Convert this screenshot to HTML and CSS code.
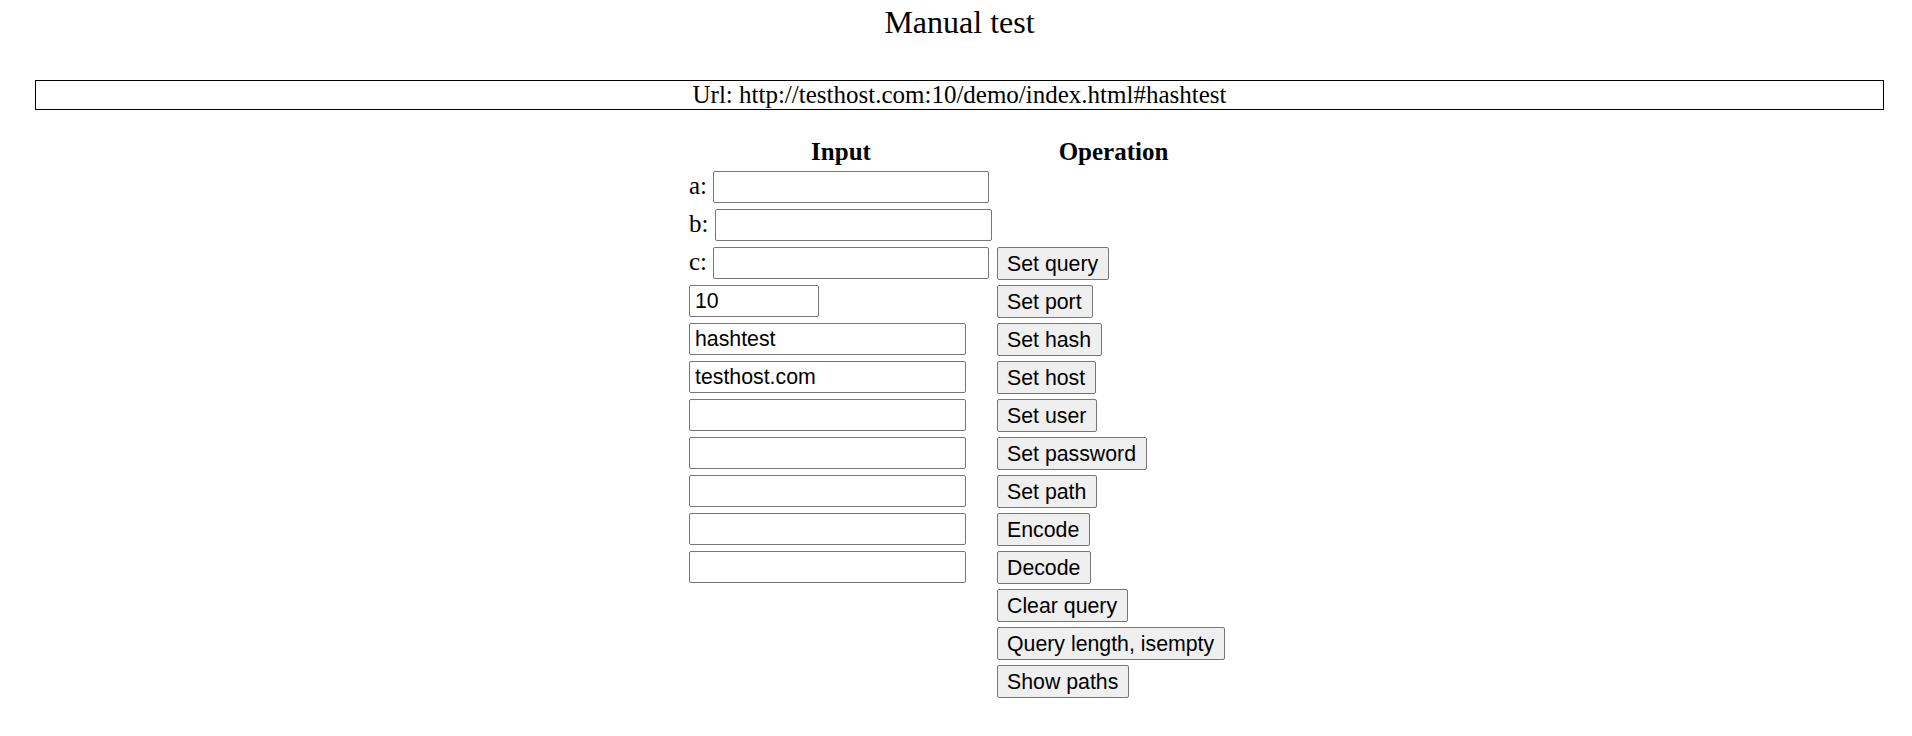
FILE: index.html
```html
<!DOCTYPE html>
<html>
<head>
<meta charset="utf-8">
<title>Manual test</title>
<link rel="stylesheet" href="styles.css">
</head>
<body>
<div class="page">
  <h2 class="title">Manual test</h2>
  <div class="url">Url: http://testhost.com:10/demo/index.html#hashtest</div>
  <table class="grid">
    <colgroup><col class="c1"><col class="c2"></colgroup>
    <thead>
      <tr><th>Input</th><th class="op">Operation</th></tr>
    </thead>
    <tbody>
      <tr><td><span class="lbl">a:</span> <input class="field fa" type="text"></td><td class="op"></td></tr>
      <tr><td><span class="lbl">b:</span> <input class="field fb" type="text"></td><td class="op"></td></tr>
      <tr><td><span class="lbl">c:</span> <input class="field fa" type="text"></td><td class="op"><button class="btn">Set query</button></td></tr>
      <tr><td><input class="field port" type="text" value="10"></td><td class="op"><button class="btn">Set port</button></td></tr>
      <tr><td><input class="field wide" type="text" value="hashtest"></td><td class="op"><button class="btn">Set hash</button></td></tr>
      <tr><td><input class="field wide" type="text" value="testhost.com"></td><td class="op"><button class="btn">Set host</button></td></tr>
      <tr><td><input class="field wide" type="text"></td><td class="op"><button class="btn">Set user</button></td></tr>
      <tr><td><input class="field wide" type="text"></td><td class="op"><button class="btn">Set password</button></td></tr>
      <tr><td><input class="field wide" type="text"></td><td class="op"><button class="btn">Set path</button></td></tr>
      <tr><td><input class="field wide" type="text"></td><td class="op"><button class="btn">Encode</button></td></tr>
      <tr><td><input class="field wide" type="text"></td><td class="op"><button class="btn">Decode</button></td></tr>
      <tr><td></td><td class="op"><button class="btn">Clear query</button></td></tr>
      <tr><td></td><td class="op"><button class="btn">Query length, isempty</button></td></tr>
      <tr><td></td><td class="op"><button class="btn">Show paths</button></td></tr>
    </tbody>
  </table>
</div>
</body>
</html>
```
FILE: styles.css
```css
html, body {
  margin: 0;
  padding: 0;
  background: #ffffff;
}

body {
  font-family: "Liberation Serif", "Times New Roman", serif;
  color: #000000;
}

.page {
  padding: 0 28px 0 35px;
}

.title {
  margin: 0;
  padding-top: 4px;
  font-size: 32px;
  line-height: 36px;
  font-weight: normal;
  text-align: center;
}

.url {
  margin-top: 40px;
  height: 28px;
  border: 1px solid #000000;
  font-size: 25px;
  line-height: 27px;
  text-align: center;
  white-space: nowrap;
}

.grid {
  margin: 28px auto 0;
  border-collapse: separate;
  border-spacing: 0;
  table-layout: fixed;
  width: 541px;
  font-size: 25px;
}

.grid .c1 { width: 304px; }
.grid .c2 { width: 237px; }

.grid th {
  padding: 0 0 5px 0;
  line-height: 28px;
  font-weight: bold;
  text-align: center;
}

.grid th.op {
  padding-left: 4px;
}

.grid td {
  height: 38px;
  padding: 0;
  vertical-align: top;
  text-align: left;
  white-space: nowrap;
}

.grid td.op {
  padding-left: 4px;
}

.lbl {
  font-size: 25px;
}

.field {
  box-sizing: border-box;
  height: 32px;
  margin: 0;
  padding: 1px 5px 0;
  border: 1px solid #767676;
  border-radius: 2px;
  background: #ffffff;
  font-family: "Liberation Sans", Arial, sans-serif;
  font-size: 21.3px;
  color: #000000;
  vertical-align: baseline;
}

.fa { width: 276px; }
.fb { width: 277px; }
.wide { width: 277px; }
.port { width: 130px; }

.btn {
  box-sizing: border-box;
  height: 33px;
  margin: 0;
  padding: 1px 10px 0 9px;
  border: 1px solid #767676;
  border-radius: 2px;
  background: #efefef;
  font-family: "Liberation Sans", Arial, sans-serif;
  font-size: 21.3px;
  line-height: 25px;
  color: #000000;
  vertical-align: top;
}
```
